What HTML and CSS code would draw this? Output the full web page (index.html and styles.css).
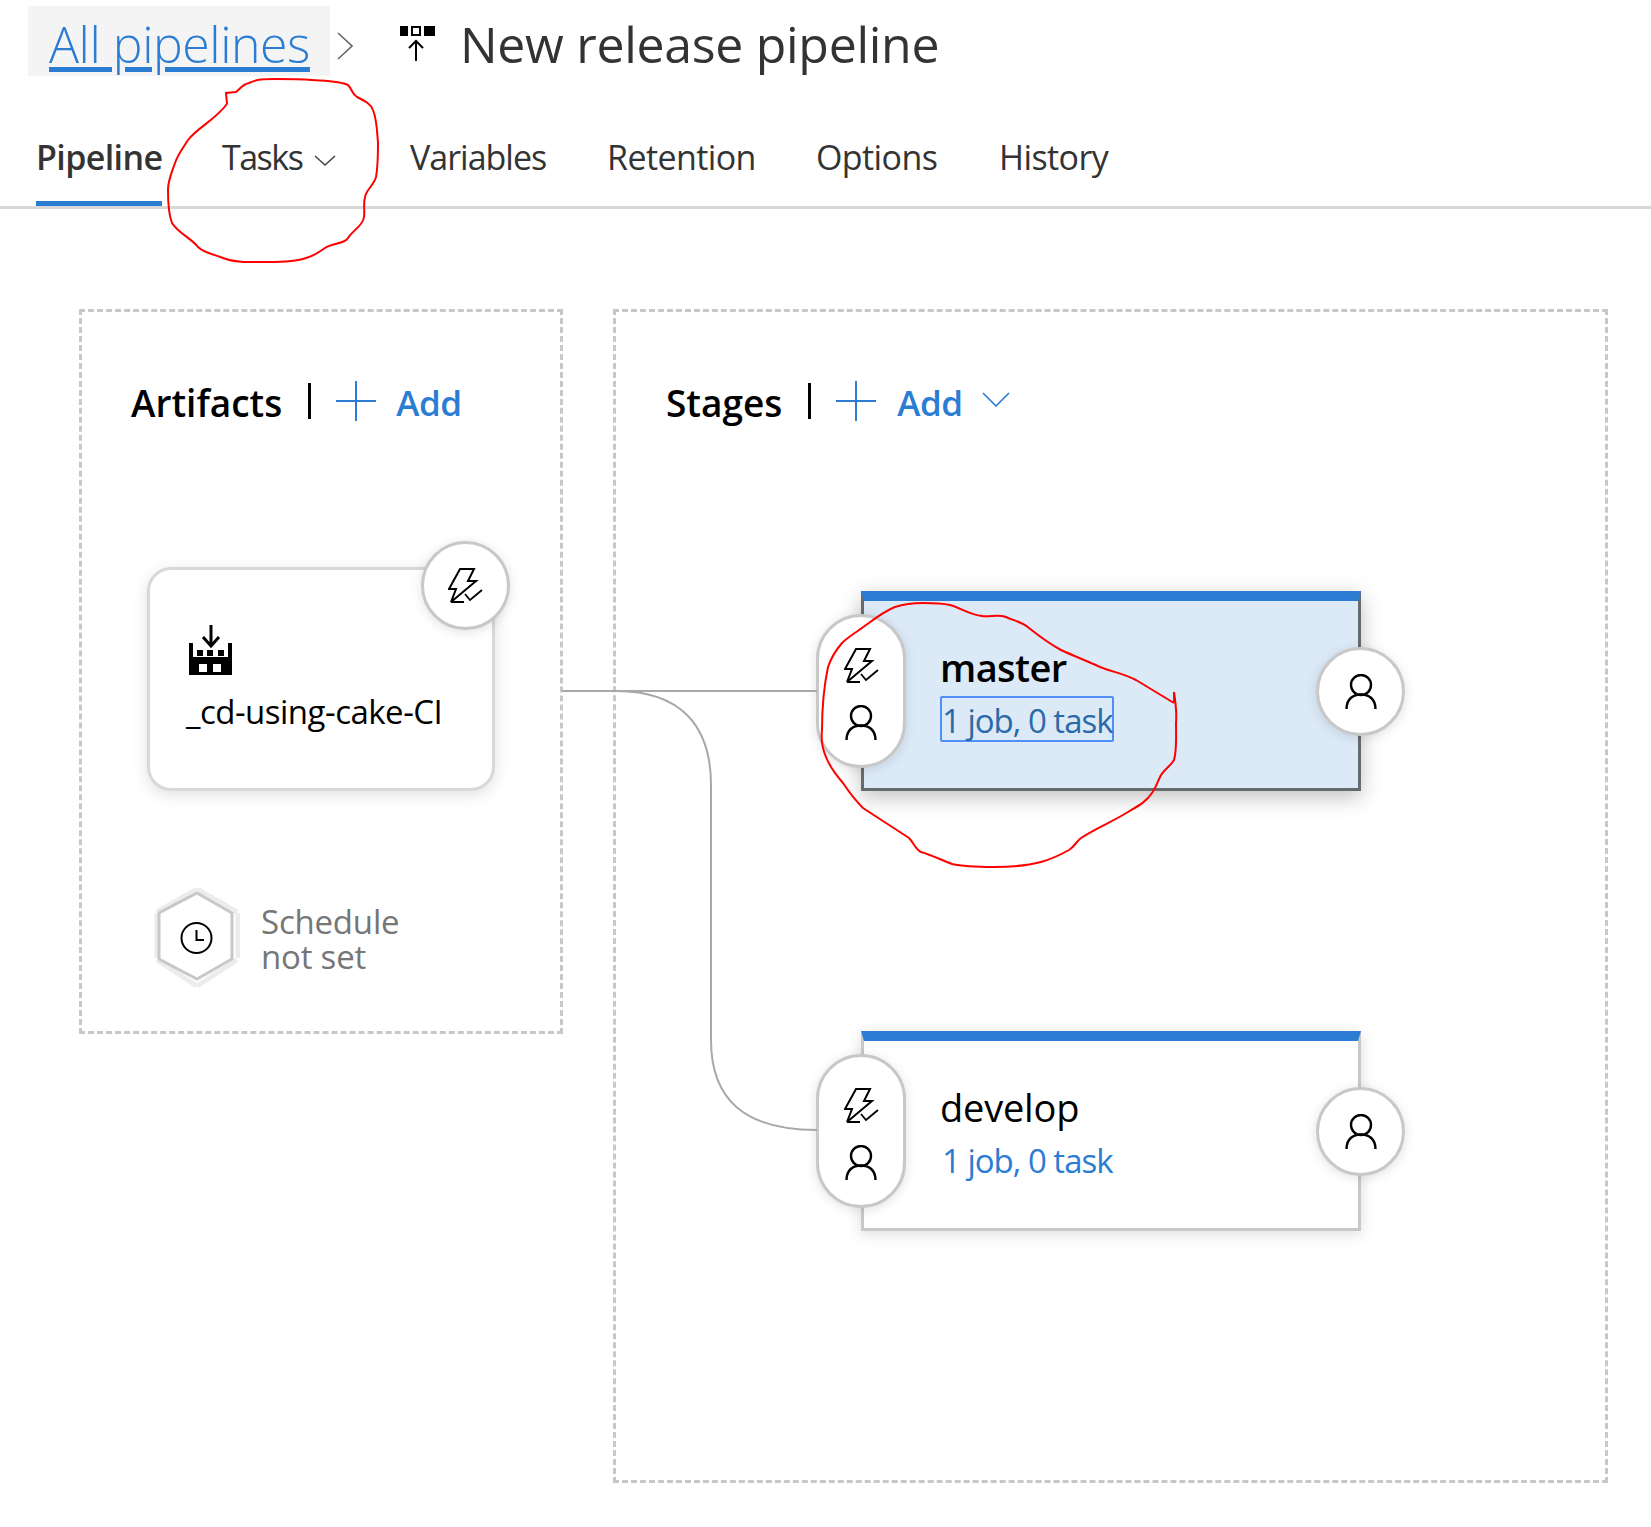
FILE: index.html
```html
<!DOCTYPE html>
<html lang="en">
<head>
<meta charset="utf-8">
<title>New release pipeline</title>
<link rel="stylesheet" href="styles.css">
</head>
<body>
<svg width="0" height="0" class="defs">
	<symbol id="flash" viewBox="0 0 35 35">
		<path d="M12 1H26L20 13H28L3 34L8 21H1ZM3 34H16" fill="none" stroke="#000" stroke-width="2"/>
		<path d="M17 26L22 32L34 22" fill="none" stroke="#000" stroke-width="1.8"/>
	</symbol>
	<symbol id="person" viewBox="0 0 32 36">
		<circle cx="16" cy="11" r="10" fill="none" stroke="#000" stroke-width="2.4"/>
		<path d="M1.5 35C1.5 25 8 20.5 16 20.5C24 20.5 30.5 25 30.5 35" fill="none" stroke="#000" stroke-width="2.4"/>
	</symbol>
</svg>

<main class="page">
	<header class="crumbs">
		<a class="crumb-link" href="#">All pipelines</a>
		<svg class="crumb-chevron" width="16" height="28" viewBox="0 0 16 28"><path d="M1 1L15 14L1 27" fill="none" stroke="#666" stroke-width="1.6"/></svg>
		<svg class="crumb-icon" width="35" height="35" viewBox="0 0 35 35">
			<rect width="8" height="10"/>
			<rect x="12" y="1" width="8" height="8" fill="none" stroke="#000" stroke-width="2"/>
			<rect x="24" width="11" height="10"/>
			<path d="M16 35V15M9 22L16 15L23 22" fill="none" stroke="#000" stroke-width="2"/>
		</svg>
		<h1 class="title">New release pipeline</h1>
	</header>

	<nav class="tabs">
		<a class="tab tab-active tab-pipeline">Pipeline</a>
		<a class="tab tab-tasks">Tasks <svg class="tab-chevron" width="22" height="11" viewBox="0 0 22 11"><path d="M1 1L11 10L21 1" fill="none" stroke="#444" stroke-width="1.5"/></svg></a>
		<a class="tab tab-variables">Variables</a>
		<a class="tab tab-retention">Retention</a>
		<a class="tab tab-options">Options</a>
		<a class="tab tab-history">History</a>
	</nav>

	<div class="canvas">
		<section class="panel panel-artifacts">
			<div class="panel-head">
				<h2 class="panel-title">Artifacts</h2>
				<span class="panel-sep"></span>
				<svg class="plus" width="40" height="40" viewBox="0 0 40 40"><path d="M0 20H40M20 0V40" stroke="#2b7cd3" stroke-width="2"/></svg>
				<a class="add">Add</a>
			</div>

			<div class="artifact-card">
				<svg class="factory" width="43" height="50" viewBox="0 0 43 50">
					<path d="M0 18H4V32H39V18H43V50H0Z"/>
					<path d="M8 25h6v6H8zM18 25h6v6h-6zM29 25h6v6h-6z"/>
					<path d="M10 39h8v8h-8zM24 39h8v8h-8z" fill="#fff"/>
					<path d="M22 0V20M14 12L22 21L30 12" fill="none" stroke="#000" stroke-width="3"/>
				</svg>
				<div class="artifact-name">_cd-using-cake-CI</div>
				<div class="node-circle node-trigger"><svg width="35" height="35"><use href="#flash"/></svg></div>
			</div>

			<div class="schedule">
				<svg class="hexagon" width="88" height="100" viewBox="0 0 88 100">
					<path d="M45 1L85 24M45 1L5 24M86 25V70M5 25V70M85 72L45 98M5 72L45 98" fill="none" stroke="#ececec" stroke-width="5"/>
					<path d="M45 5L80 25V71L45 91L7 71V25Z" fill="#fff" stroke="#c8c8c8" stroke-width="3"/>
					<circle cx="44.5" cy="50" r="15" fill="none" stroke="#000" stroke-width="2"/>
					<path d="M44.5 42V52H52" fill="none" stroke="#000" stroke-width="2"/>
				</svg>
				<div class="schedule-text">Schedule<br>not set</div>
			</div>
		</section>

		<section class="panel panel-stages">
			<div class="panel-head">
				<h2 class="panel-title">Stages</h2>
				<span class="panel-sep"></span>
				<svg class="plus" width="40" height="40" viewBox="0 0 40 40"><path d="M0 20H40M20 0V40" stroke="#2b7cd3" stroke-width="2"/></svg>
				<a class="add">Add</a>
				<svg class="add-chevron" width="28" height="15" viewBox="0 0 28 15"><path d="M1 1L14 14L27 1" fill="none" stroke="#2b7cd3" stroke-width="1.6"/></svg>
			</div>

			<div class="stage stage-selected">
				<div class="stage-pre">
					<svg width="35" height="35"><use href="#flash"/></svg>
					<svg width="32" height="36"><use href="#person"/></svg>
				</div>
				<div class="stage-name">master</div>
				<a class="stage-jobs">1 job, 0 task</a>
				<div class="node-circle node-post"><svg width="32" height="36"><use href="#person"/></svg></div>
			</div>

			<div class="stage">
				<div class="stage-pre">
					<svg width="35" height="35"><use href="#flash"/></svg>
					<svg width="32" height="36"><use href="#person"/></svg>
				</div>
				<div class="stage-name">develop</div>
				<a class="stage-jobs">1 job, 0 task</a>
				<div class="node-circle node-post"><svg width="32" height="36"><use href="#person"/></svg></div>
			</div>
		</section>
	</div>

	<!-- connector lines between the artifact and the stages -->
	<svg class="connectors" width="1651" height="1527" viewBox="0 0 1651 1527">
		<path d="M562 691H817" fill="none" stroke="#a8a8a8" stroke-width="2"/>
		<path d="M616 691C680 691 711 725 711 785V1040C711 1100 745 1130 817 1130" fill="none" stroke="#a8a8a8" stroke-width="2"/>
	</svg>

	<!-- red pen marks drawn on top of the screenshot -->
	<svg class="scribbles" width="1651" height="1527" viewBox="0 0 1651 1527">
		<path d="M227 104L226 93L236 92C241 88 243 84 249 83C257 79 265 79 274 79C288 79 300 79 312 80C325 81 340 81 348 85C352 89 352 94 357 97C365 101 371 104 373 110C377 120 377 131 378 143C378 155 378 166 376 177C374 185 366 190 365 197C363 205 365 211 364 217C363 226 353 230 348 238C345 244 332 243 325 248C318 253 314 256 306 258C295 262 281 262 268 262C253 262 235 263 223 258C213 254 204 253 198 247C191 238 178 233 172 223C168 213 168 201 168 190C168 180 172 172 175 163C178 154 183 148 188 140C198 127 214 121 227 104" fill="none" stroke="#f00" stroke-width="2"/>
		<path d="M1174 692L1174 703M1174 692C1176 705 1177 712 1176 723C1176 738 1177 750 1174 760C1170 767 1163 770 1160 777C1157 783 1156 788 1152 793C1146 802 1138 806 1128 812C1112 822 1096 828 1081 838C1076 842 1074 847 1069 850C1060 855 1052 859 1041 862C1026 866 1010 867 994 867C979 867 965 867 952 864C941 860 932 855 921 852C915 849 914 843 909 838C894 828 878 818 863 808C855 800 849 792 843 783C836 775 830 767 826 757C822 748 821 739 822 730C822 710 824 686 828 667C831 658 836 650 842 643C847 638 852 635 859 630C871 622 882 612 895 607C904 604 914 603 923 603C932 603 941 603 950 605C961 608 970 615 982 616C990 617 999 614 1006 617C1015 621 1022 622 1029 628C1039 636 1050 644 1061 650C1074 656 1087 661 1100 667C1113 672 1125 674 1136 680C1149 688 1161 695 1174 703" fill="none" stroke="#f00" stroke-width="2"/>
	</svg>
</main>
</body>
</html>
```

FILE: styles.css
```css
body { margin:0; background:#fff; font-family:"Open Sans", "Noto Sans", sans-serif; color:#000; }
.defs { position:absolute; }
.page { position:relative; width:1651px; height:1527px; overflow:hidden; }

.crumbs { display:flex; align-items:center; height:70px; padding-top:6px; }
.crumb-link { display:block; box-sizing:border-box; width:302px; height:70px; margin-left:28px; padding:3px 0 0 21px; background:#f4f4f4; font-size:50px; line-height:70px; font-weight:300; color:#2b7cd3; letter-spacing:-0.45px; text-decoration:underline; text-decoration-thickness:5px; text-underline-offset:4px; white-space:nowrap; }
.crumb-chevron { margin:9px 0 0 7px; }
.crumb-icon { margin:5px 0 0 47px; }
.title { margin:6px 0 0 25px; font-size:50px; line-height:70px; font-weight:400; color:#333; letter-spacing:-0.3px; white-space:nowrap; }

.tabs { display:flex; box-sizing:border-box; height:133px; padding-left:36px; border-bottom:3px solid #d8d8d8; }
.tab { display:block; box-sizing:border-box; height:130px; padding-top:58px; font-size:34px; line-height:46px; color:#333; letter-spacing:-0.6px; white-space:nowrap; }
.tab-active { font-weight:600; border-bottom:5px solid #2b7cd3; }
.tab-pipeline { width:126px; }
.tab-tasks { margin-left:60px; width:188px; letter-spacing:-1.5px; }
.tab-chevron { margin-left:4px; vertical-align:4px; }
.tab-variables { width:197px; letter-spacing:-1px; }
.tab-retention { width:209px; }
.tab-options { width:183px; }

.canvas { display:flex; gap:50px; margin:100px 0 0 79px; position:relative; z-index:1; }
.panel { position:relative; box-sizing:border-box; border:3px dashed #c8c8c8; }
.panel-artifacts { width:484px; height:725px; }
.panel-stages { width:995px; height:1174px; }

.panel-head { display:flex; align-items:center; height:40px; margin-top:69px; padding-left:50px; }
.panel-artifacts .panel-head { padding-left:49px; }
.panel-title { margin:4px 0 0; font-size:37px; line-height:40px; font-weight:600; letter-spacing:0; white-space:nowrap; }
.panel-sep { width:3px; height:36px; margin:0 25px 0 26px; background:#000; }
.add { margin:4px 0 0 21px; font-size:35px; line-height:40px; font-weight:600; color:#2b7cd3; letter-spacing:-0.5px; }
.panel-artifacts .add { margin-left:20px; }
.add-chevron { margin:-4px 0 0 19px; }

.artifact-card { position:relative; box-sizing:border-box; width:348px; height:224px; margin:146px 0 0 65px; padding:55px 0 0 39px; background:#fff; border:3px solid #d8d8d8; border-radius:24px; box-shadow:0 4px 16px rgba(0,0,0,0.12); }
.factory { display:block; }
.artifact-name { margin:14px 0 0 -3px; font-size:33px; line-height:46px; letter-spacing:-0.5px; white-space:nowrap; }

.node-circle { position:absolute; display:flex; align-items:center; justify-content:center; box-sizing:border-box; width:89px; height:89px; background:#fff; border:3px solid #c8c8c8; border-radius:50%; box-shadow:0 2px 12px rgba(0,0,0,0.12); }
.node-trigger { top:-29px; right:-18px; }

.schedule { display:flex; align-items:center; gap:21px; margin:97px 0 0 70px; }
.hexagon { flex:none; }
.schedule-text { margin-top:2px; font-size:33px; line-height:35px; color:#767676; letter-spacing:-0.2px; }

.stage { position:relative; box-sizing:border-box; width:500px; height:200px; margin:0 0 240px 245px; padding:43px 0 0 76px; background:#fff; border:3px solid #c8c8c8; border-top:10px solid #2b7cd3; box-shadow:0 3px 14px rgba(0,0,0,0.14); }
.panel-head + .stage { margin-top:170px; }
.stage-selected { background:#dce9f7; border-left-color:#666b70; border-right-color:#666b70; border-bottom-color:#666b70; box-shadow:0 6px 20px rgba(0,0,0,0.25); }
.stage-pre { position:absolute; top:13px; left:-48px; display:flex; flex-direction:column; align-items:center; gap:22px; box-sizing:border-box; width:90px; height:154px; padding-top:31px; background:#fff; border:3px solid #c8c8c8; border-radius:45px; box-shadow:0 2px 12px rgba(0,0,0,0.12); }
.stage-name { height:46px; font-size:38px; line-height:46px; letter-spacing:-0.2px; }
.stage-selected .stage-name { font-weight:600; letter-spacing:-0.6px; }
.stage-jobs { display:inline-block; box-sizing:border-box; width:174px; height:46px; margin:6px 0 0; border:2px solid transparent; border-radius:2px; font-size:33px; line-height:46px; color:#2b7cd3; letter-spacing:-1px; white-space:nowrap; }
.stage-selected .stage-jobs { border-color:#4f8ff7; color:#2b6aa8; }
.node-post { top:46px; right:-47px; }

.connectors { position:absolute; top:0; left:0; z-index:2; pointer-events:none; }
.stage-pre, .node-post, .node-trigger { z-index:3; }
.scribbles { position:absolute; top:0; left:0; z-index:4; pointer-events:none; }
```
